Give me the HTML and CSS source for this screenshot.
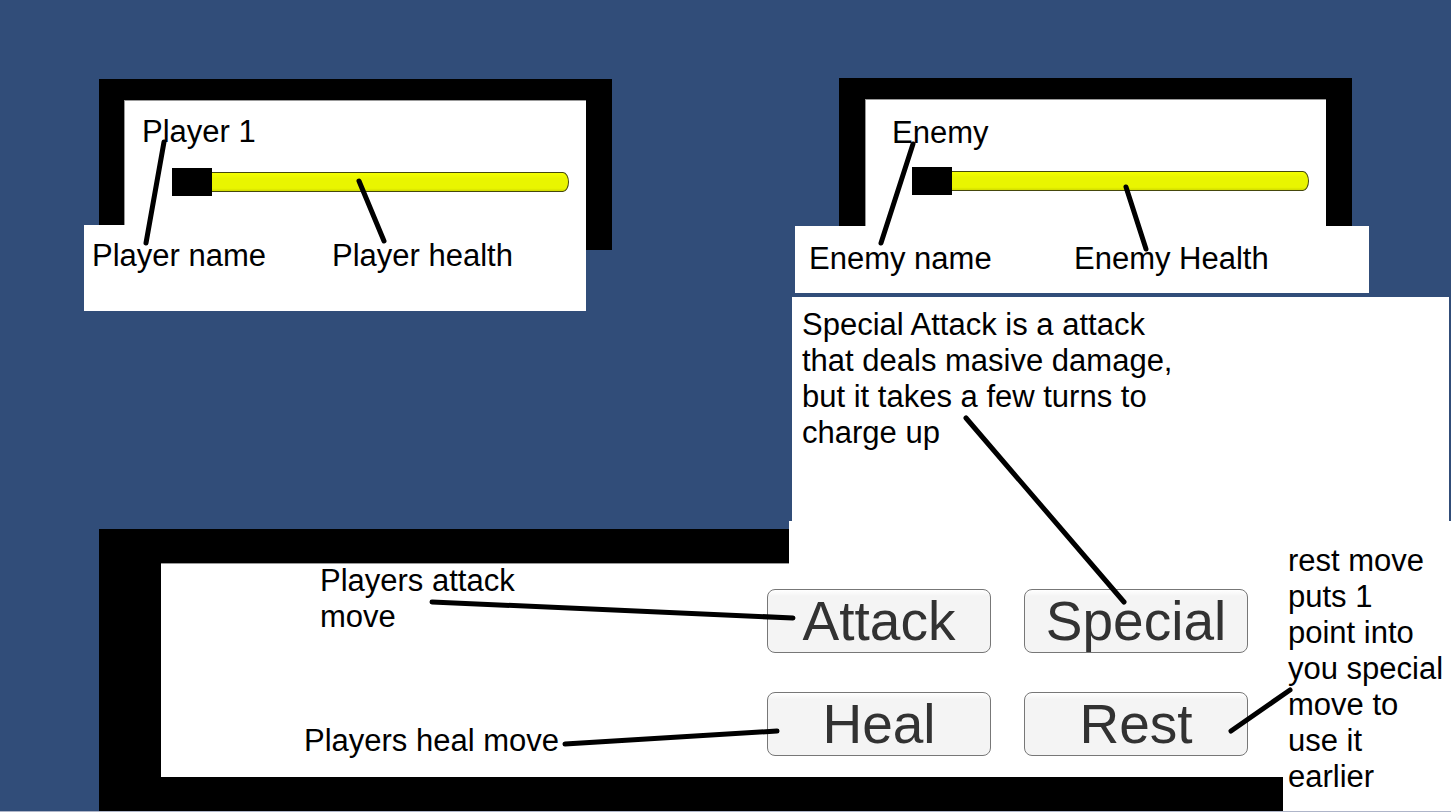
FILE: index.html
```html
<!DOCTYPE html>
<html lang="en">
<head>
<meta charset="utf-8">
<title>Battle screen guide</title>
<link rel="stylesheet" href="styles.css">
</head>
<body>
<main class="scene">
  <div class="arena">
    <section class="fighter fighter--player">
      <div class="frame">
        <div class="frame__body">
          <label class="fighter__name" for="player-health">Player 1</label>
          <input class="health" id="player-health" type="range" min="0" max="100" value="0">
        </div>
      </div>
      <div class="caption">
        <p>Player name</p>
        <p>Player health</p>
      </div>
    </section>

    <div class="right">
      <section class="fighter fighter--enemy">
        <div class="frame">
          <div class="frame__body">
            <label class="fighter__name" for="enemy-health">Enemy</label>
            <input class="health" id="enemy-health" type="range" min="0" max="100" value="0">
          </div>
        </div>
        <div class="caption">
          <p>Enemy name</p>
          <p>Enemy Health</p>
        </div>
      </section>
      <p class="special-note">Special Attack is a attack<br>that deals masive damage,<br>but it takes a few turns to<br>charge up</p>
    </div>
  </div>

  <section class="menu">
    <div class="menu__frame">
      <div class="menu__notes">
        <p class="menu__attack-note">Players attack<br>move</p>
        <p>Players heal move</p>
      </div>
      <div class="moves">
        <button class="move" type="button">Attack</button>
        <button class="move" type="button">Special</button>
        <button class="move" type="button">Heal</button>
        <button class="move" type="button">Rest</button>
      </div>
    </div>
    <div class="menu__patch"></div>
    <p class="rest-note">rest move<br>puts 1<br>point into<br>you special<br>move to<br>use it<br>earlier</p>
  </section>

  <svg class="pointers" viewBox="0 0 1451 812" preserveAspectRatio="none" aria-hidden="true">
    <path d="M164 142 146 243"/>
    <path d="M359 181 384 241"/>
    <path d="M913 144 881 243"/>
    <path d="M1126 187 1146 249"/>
    <path d="M966 418 1124 602"/>
    <path d="M432 602 793 618"/>
    <path d="M565 744 777 731"/>
    <path d="M1231 731 1290 690"/>
  </svg>
</main>
</body>
</html>
```

FILE: styles.css
```css
* {
  box-sizing: border-box;
}

body {
  margin: 0;
  background: #314d79;
  color: #000;
  font: 31px/36px "Liberation Sans", Arial, sans-serif;
}

p {
  margin: 0;
}

.scene {
  position: relative;
  display: flex;
  flex-direction: column;
  min-height: 100vh;
  border-bottom: 1px solid #aeb5c9;
}

/* Fighters */
.arena {
  flex: 1;
  display: grid;
  grid-template-columns: 528fr 177fr 662fr;
  padding: 78px 0 0 84px;
}

.right {
  grid-column: 3;
  display: flex;
  flex-direction: column;
}

.fighter {
  display: grid;
  align-content: start;
}

.frame,
.caption {
  grid-area: 1 / 1;
}

.frame {
  border: solid #000;
  border-width: 21px 26px 0;
  background: #fff;
}

.frame__body {
  display: flex;
  flex-direction: column;
  box-shadow: inset 1px 1px #999;
}

.caption {
  display: grid;
  background: #fff;
  z-index: 1;
}

.fighter--player {
  padding-top: 1px;
}

.fighter--player .frame {
  height: 171px;
  margin-left: 15px;
  border-left-width: 25px;
}

.fighter--player .frame__body {
  padding: 14px 17px 30px 18px;
  gap: 18px;
}

.fighter--player .health {
  margin-left: 30px;
}

.fighter--player .caption {
  grid-template-columns: 240fr 254fr;
  height: 86px;
  margin: 146px 26px 0 0;
  padding: 13px 0 0 8px;
}

.fighter--enemy {
  margin: 0 82px 4px 6px;
}

.fighter--enemy .frame {
  height: 148px;
  margin: 0 17px 0 44px;
}

.fighter--enemy .frame__body {
  padding: 16px 17px 32px 27px;
  gap: 16px;
}

.fighter--enemy .health {
  margin-left: 20px;
}

.fighter--enemy .caption {
  grid-template-columns: 265fr 295fr;
  height: 67px;
  margin-top: 148px;
  padding: 15px 0 0 14px;
}

.health {
  appearance: none;
  height: 28px;
  margin: 0;
  background: none;
}

.health::-webkit-slider-runnable-track {
  height: 20px;
  border: 1px solid #45480c;
  border-radius: 2px 6px 6px 2px / 2px 10px 10px 2px;
  background: linear-gradient(#f4ff00, #e9f500 30%, #e9f500 85%, #d0da00);
}

.health::-webkit-slider-thumb {
  appearance: none;
  width: 40px;
  height: 28px;
  margin: -5px 0 0 -1px;
  border-radius: 0;
  background: #000;
}

.special-note {
  flex: 1;
  margin: 0 2px 0 3px;
  padding: 10px;
  background: #fff;
}

/* Move menu */
.menu {
  display: grid;
  grid-template-columns: 690fr 494fr 168fr;
  grid-template-rows: 43px auto;
  padding-left: 99px;
}

.menu__frame {
  grid-area: 1 / 1 / 3 / 3;
  display: grid;
  grid-template-columns: 606fr 516fr;
  margin-top: 8px;
  border: solid #000;
  border-width: 34px 0 34px 62px;
  background: #fff;
  box-shadow: inset 0 1px #999;
}

.menu__patch {
  grid-area: 1 / 2;
  background: #fff;
  z-index: 1;
}

.menu__notes {
  display: flex;
  flex-direction: column;
  gap: 88px;
  padding-left: 143px;
}

.menu__attack-note {
  padding-left: 16px;
}

.moves {
  display: grid;
  grid-template-columns: 1fr 1fr;
  grid-auto-rows: 64px;
  gap: 39px 33px;
  padding: 26px 35px 21px 0;
}

.move {
  padding: 0;
  border: 1px solid #777;
  border-radius: 8px;
  background: linear-gradient(#fff, #f4f4f4 10%);
  color: #323232;
  font: 55px/62px "Liberation Sans", Arial, sans-serif;
}

.rest-note {
  grid-area: 1 / 3 / 3 / 4;
  padding: 22px 0 16px 5px;
  background: #fff;
}

/* Lines from each note to its control */
.pointers {
  position: absolute;
  inset: 0;
  width: 100%;
  height: calc(100% + 1px);
  z-index: 2;
  fill: none;
  stroke: #000;
  stroke-width: 5px;
  stroke-linecap: round;
  pointer-events: none;
}

.pointers path {
  vector-effect: non-scaling-stroke;
}
```
